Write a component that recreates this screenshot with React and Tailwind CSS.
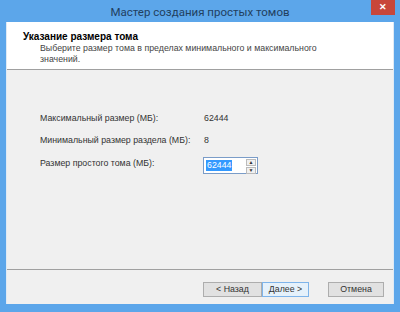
import React from 'react';

function Row({ label, children }) {
  return (
    <div className="flex h-[22.5px] items-center">
      <div className="w-[164px] whitespace-nowrap">{label}</div>
      <div>{children}</div>
    </div>
  );
}

export default function App() {
  return (
    <div
      className="flex h-[312px] w-[400px] flex-col bg-[#5ca6ea]"
      style={{ fontFamily: '"Liberation Sans", Arial, sans-serif' }}
    >
      {/* title bar */}
      <div className="relative flex h-[22px] shrink-0 items-center justify-center pt-[3px]">
        <span className="text-[11.5px] text-[#22405f]" style={{ fontFamily: 'Roboto, sans-serif' }}>
          Мастер создания простых томов
        </span>
        <div className="absolute right-[5px] top-0 flex h-[15px] w-[24px] items-center justify-center bg-[#c8463a] text-[9px] font-bold text-white">
          ✕
        </div>
      </div>

      <div className="flex flex-1 flex-col px-[6px] pb-[8px]">
        <div className="flex flex-1 flex-col border-l border-r border-[#dfeaf5] bg-[#f0f0f0] text-[8.8px] text-[#333]">
          {/* header */}
          <div className="h-[48px] shrink-0 border-b border-[#a0a0a0] bg-white pl-[16px] pt-[9px]">
            <div className="text-[10px] font-bold leading-[12px] text-black">Указание размера тома</div>
            <div className="w-[300px] pl-[17px] leading-[11px] text-[#444]">
              Выберите размер тома в пределах минимального и максимального значений.
            </div>
          </div>

          {/* content */}
          <div className="flex flex-1 flex-col pl-[33px] pt-[37px]">
            <Row label="Максимальный размер (МБ):">62444</Row>
            <Row label="Минимальный размер раздела (МБ):">8</Row>
            <Row label="Размер простого тома (МБ):">
              <div className="mt-[4px] flex h-[17px] w-[55px] -translate-x-[1px] border border-[#7a9cc8] bg-white">
                <div className="flex flex-1 items-center pl-[2px]">
                  <span className="bg-[#3399ff] px-[1px] leading-[11px] text-white">62444</span>
                </div>
                <div className="flex w-[12px] flex-col gap-[1px] p-[1px]">
                  <div className="flex flex-1 items-center justify-center border border-[#bbb] bg-[#f0f0f0] text-[5px] leading-none">▲</div>
                  <div className="flex flex-1 items-center justify-center border border-[#bbb] bg-[#f0f0f0] text-[5px] leading-none">▼</div>
                </div>
              </div>
            </Row>
          </div>

          {/* footer */}
          <div className="flex h-[35px] shrink-0 items-start border-t border-[#a0a0a0] pl-[196px] pt-[12px]">
            <div className="flex h-[15px] w-[59px] items-center justify-center border border-[#adadad] bg-[#e1e1e1]">&lt; Назад</div>
            <div className="flex h-[15px] w-[47px] items-center justify-center border border-[#7eb4ea] bg-[#e5f1fb]">Далее &gt;</div>
            <div className="ml-[19px] flex h-[15px] w-[56px] items-center justify-center border border-[#adadad] bg-[#e1e1e1]">Отмена</div>
          </div>
        </div>
      </div>
    </div>
  );
}
